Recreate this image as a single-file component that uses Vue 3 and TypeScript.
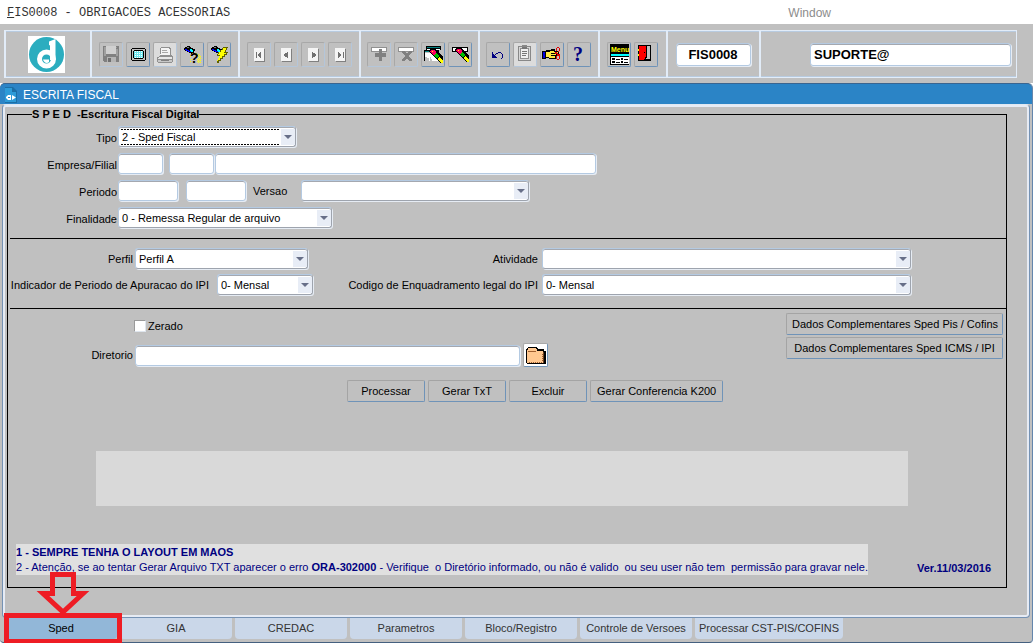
<script setup lang="ts">
import { ref } from 'vue'

interface Layer {
  d: string
  fill: string
}

interface Tool {
  label: string
  look?: 'pale' | 'dim'
  layers: Layer[]
  glyph?: 'help' | 'menu' | 'query'
}

const torch: Layer[] = [
  { fill: '#000', d: 'M7 4h3v1h1v1h2v1h2v2h-1v2h-1v1h-2v-1h-2v-1h-2v-1h-2v-1h-1v-2h1v-1h1z' },
  { fill: '#00f', d: 'M5 7h2v1h2v1h2v1h-3v-1h-2v-1h-1z' },
  { fill: '#0ff', d: 'M10 7h2v1h1v2h-2v-1h-1z' },
  { fill: '#808080', d: 'M7 5h2v1h-2z' },
]

const wand = (x: number, y: number): Layer[] => [
  { fill: '#000', d: `M${x + 2} ${y}h4l8 8v6h-3l-11 -11v-2z` },
  { fill: '#ff0060', d: `M${x + 2} ${y + 1}h3l2 2v1l-2 2h-1l-3 -3z` },
  { fill: '#ff0', d: `M${x + 3} ${y + 2}h1v1h-1zM${x + 10} ${y + 8}l4 3v3h-2l-4 -4z` },
  { fill: '#00c000', d: `M${x + 7} ${y + 4}l3 3l-2 3l-3 -3z` },
]

const page: Layer[] = [
  { fill: '#808080', d: 'M8 19h10v1H8zM17 7h1v13h-1z' },
  { fill: '#f4f4f4', d: 'M7 6h10v13H7z' },
]

const bar = (edge: string): Layer[] => [
  { fill: edge, d: 'M4 5h16v5H4z' },
  { fill: '#fff', d: 'M5 6h14v3H5z' },
]

const groups: { name: string; tools: Tool[] }[] = [
  {
    name: 'file',
    tools: [
      {
        label: 'Salvar',
        look: 'dim',
        layers: [
          { fill: '#808080', d: 'M4 4h16v16H5v-1H4z' },
          { fill: '#a0a0a0', d: 'M5 5h2v9H5zM17 7h2v7h-2zM17 5h1v1h-1z' },
          { fill: '#d0d0d0', d: 'M7 4h10v8H7z' },
          { fill: '#b4b4b4', d: 'M8 15h9v5H8z' },
          { fill: '#707070', d: 'M9 16h3v4H9z' },
        ],
      },
      {
        label: 'Tela',
        layers: [
          { fill: '#000', d: 'M6 6h13v1h1v11h-1v1H6v-1H5V7h1z' },
          { fill: '#c0c0c0', d: 'M6 7h13v11H6z' },
          { fill: '#000', d: 'M8 8h9v1h1v7h-1v1H8v-1H7V9h1z' },
          { fill: '#70e8f0', d: 'M8 9h9v7H8z' },
          {
            fill: '#fff',
            d: 'M9 9h1v1H9zM11 9h1v1h-1zM13 9h1v1h-1zM15 9h1v1h-1zM9 11h1v1H9zM11 11h1v1h-1zM13 11h1v1h-1zM15 11h1v1h-1zM9 13h1v1H9zM11 13h1v1h-1zM13 13h1v1h-1zM15 13h1v1h-1zM9 15h1v1H9zM11 15h1v1h-1zM13 15h1v1h-1zM15 15h1v1h-1z',
          },
        ],
      },
      {
        label: 'Imprimir',
        look: 'pale',
        layers: [
          { fill: '#909090', d: 'M8 5h9v1h1v7h1v1h1v6h-1v1H5v-1H4v-5h2v-1h1V6h1z' },
          { fill: '#f4f4f4', d: 'M8 6h8v1h1v6H7v-1h1z' },
          { fill: '#a8a8a8', d: 'M9 8h5v1H9zM9 10h6v1H9z' },
          { fill: '#e8e8e8', d: 'M6 15h13v2H5v-1h1z' },
          { fill: '#c8c8c8', d: 'M5 18h14v2H5z' },
          { fill: '#808080', d: 'M8 18h8v1H8z' },
        ],
      },
      {
        label: 'Entrar consulta',
        glyph: 'query',
        layers: [
          ...torch,
          {
            fill: '#ff0',
            d: 'M12 11h1v1h-1zM14 11h1v1h-1zM16 11h1v1h-1zM18 12h1v1h-1zM17 13h1v1h-1zM19 13h1v1h-1zM18 14h1v1h-1zM20 14h1v1h-1zM19 15h1v1h-1zM18 16h1v1h-1zM20 16h1v1h-1zM17 17h1v1h-1zM19 17h1v1h-1zM18 18h1v1h-1zM20 18h1v1h-1zM17 19h1v1h-1zM19 19h1v1h-1zM18 20h1v1h-1zM20 20h1v1h-1zM10 14h1v1h-1zM11 17h1v1h-1zM10 19h1v1h-1z',
          },
        ],
      },
      {
        label: 'Executar consulta',
        layers: [
          ...torch,
          { fill: '#606000', d: 'M16 5h5v1h-1v2h-1v2h2v1h-1v2h-2v2h-2v2h-2v2h-2v2h-2v-3h1v-2h1v-2h-2v-2h1v-2h2v-2h2v-2h1z' },
          { fill: '#ff0', d: 'M16 6h3v2h-1v2h-1v1h2v1h-2v2h-2v2h-2v2h-2v1h-1v-1h1v-2h1v-2h1v-1h-2v-1h1v-2h2v-2h2z' },
        ],
      },
    ],
  },
  {
    name: 'nav',
    tools: [
      { label: 'Primeiro', look: 'dim', layers: [...page, { fill: '#707070', d: 'M9 10h1v6H9zM14 10v6h-1v-1h-1v-1h-1v-2h1v-1h1v-1z' }] },
      { label: 'Anterior', look: 'dim', layers: [...page, { fill: '#707070', d: 'M14 10v6h-1v-1h-2v-1h-1v-2h1v-1h2v-1z' }] },
      { label: 'Proximo', look: 'dim', layers: [...page, { fill: '#707070', d: 'M11 10h1v1h2v1h1v2h-1v1h-2v1h-1z' }] },
      { label: 'Ultimo', look: 'dim', layers: [...page, { fill: '#707070', d: 'M15 10h1v6h-1zM10 10h1v1h1v1h1v2h-1v1h-1v1h-1z' }] },
    ],
  },
  {
    name: 'record',
    tools: [
      { label: 'Inserir', look: 'dim', layers: [...bar('#909090'), { fill: '#808080', d: 'M12 7h3v4h4v4h-4v4h-3v-4H8v-4h4z' }] },
      {
        label: 'Remover',
        look: 'dim',
        layers: [...bar('#909090'), { fill: '#808080', d: 'M8 9h3v1h1v1h2v-1h1V9h3v2h-1v1h-1v1h-1v2h1v1h1v1h1v2h-3v-1h-1v-1h-2v1h-1v1H8v-2h1v-1h1v-1h1v-2h-1v-1H9v-1H8z' }],
      },
      {
        label: 'Limpar tela',
        layers: [
          { fill: '#000', d: 'M5 4h15v4H5zM3 8h15v3h-1v-1H4v9H3z' },
          { fill: '#008080', d: 'M6 5h13v1H6zM4 9h13v1H4z' },
          { fill: '#fff', d: 'M6 7h13v1H6zM4 11h13v8H4z' },
          { fill: '#c0c0c0', d: 'M4 15h2v1h2v4H4zM9 15h1v2h1v3H9z' },
          ...wand(8, 7),
        ],
      },
      { label: 'Limpar registro', layers: [...bar('#000'), ...wand(7, 6)] },
    ],
  },
  {
    name: 'edit',
    tools: [
      { label: 'Desfazer', layers: [{ fill: '#000080', d: 'M6 10h1v2h1v1h1v-1h1v-1h2v-1h3v1h1v1h1v4h-1v1h-1v-1h1v-4h-1v-1h-3v1h-2v1h-1v1h1v1h1v1H6z' }] },
      {
        label: 'Lista',
        look: 'pale',
        layers: [
          { fill: '#888', d: 'M5 4h4V3h5v1h4v15H5z' },
          { fill: '#d8d8d8', d: 'M6 5h11v13H6z' },
          { fill: '#909090', d: 'M7 6h9v11H7z' },
          { fill: '#f0f0f0', d: 'M8 7h7v9H8z' },
          { fill: '#777', d: 'M9 5h5v2H9zM9 9h5v1H9zM9 11h5v1H9zM9 13h4v1H9z' },
        ],
      },
      {
        label: 'Recortar',
        layers: [
          { fill: '#000', d: 'M3 9h3v-1h5V7h4v2h4v3h-2v2h-1v3H9v-1H6v1H2v-8z' },
          { fill: '#0000e0', d: 'M3 10h2v6H3z' },
          { fill: '#ffe840', d: 'M6 10h4V9h4v1h4v1h-6v1h4v1h-4v1h3v2H9v-1H6z' },
          { fill: '#000', d: 'M11 11h5v1h-5zM11 13h4v1h-4z' },
          { fill: '#e00000', d: 'M17 5h2v1h1v3h-1v1h-1V9h1V6h-2v3h-1V6h1zM15 10h2v1h1v1h2v2h-1v-1h-2v-1h-2zM17 13h2v1h1v3h-1v1h-2v-1h-1v-3h1v3h2v-3h-2z' },
        ],
      },
      { label: 'Ajuda', glyph: 'help', layers: [] },
    ],
  },
  {
    name: 'app',
    tools: [
      {
        label: 'Menu',
        glyph: 'menu',
        layers: [
          { fill: '#000', d: 'M3 2h19v21H3z' },
          { fill: '#0ff', d: 'M4 12h18v2H4z' },
          { fill: '#fff', d: 'M4 15h18v7H4z' },
          { fill: '#000', d: 'M5 16h3v2H5zM9 17h4v1H9zM14 16h2v2h-2zM17 17h4v1h-4zM5 19h3v2H5zM9 20h4v1H9zM14 19h2v2h-2zM17 20h4v1h-4z' },
        ],
      },
      {
        label: 'Sair',
        layers: [
          { fill: '#000', d: 'M4 3h13v16H4z' },
          { fill: '#c0c0c0', d: 'M12 4h4v13h-4z' },
          { fill: '#f00', d: 'M5 4h7v11h-1v2h-1v1H5z' },
          { fill: '#ff0', d: 'M4 7h1v2H4zM4 12h1v2H4z' },
          { fill: '#000', d: 'M12 4h1v12h-1zM11 15h1v3h-1zM10 10h1v1h-1z' },
        ],
      },
    ],
  },
]

const tabs = ['Sped', 'GIA', 'CREDAC', 'Parametros', 'Bloco/Registro', 'Controle de Versoes', 'Processar CST-PIS/COFINS']
const activeTab = ref('Sped')
const actions = ['Processar', 'Gerar TxT', 'Excluir', 'Gerar Conferencia K200']
const extras = ['Dados Complementares Sped Pis / Cofins', 'Dados Complementares Sped ICMS / IPI']

const program = ref('FIS0008')
const user = ref('SUPORTE@')
const tipo = ref('2 - Sped Fiscal')
const finalidade = ref('0 - Remessa Regular de arquivo')
const perfil = ref('Perfil A')
const apuracao = ref('0- Mensal')
const enquadramento = ref('0- Mensal')
const versao = ref('')
const atividade = ref('')
const zerado = ref(false)
</script>

<template>
  <div class="app">
    <header class="menubar">
      <span class="program-title"><u>F</u>IS0008 - OBRIGACOES ACESSORIAS</span>
      <span class="window-menu">Window</span>
    </header>

    <div class="toolbar-area">
      <div class="toolbar">
        <div class="cell cell-logo">
          <svg class="logo" viewBox="0 0 37 37" aria-label="Logo">
            <rect width="37" height="37" fill="#fff" />
            <circle cx="18.500" cy="18.500" r="17.500" fill="#2badbf" />
            <circle cx="18.500" cy="23" r="7" fill="none" stroke="#fff" stroke-width="5" />
            <path d="M21 5.500L27.500 3V24H22V9.500L21 9Z" fill="#fff" />
            <path d="M15 23.500h6v2.500c-2 2-5 1-6-2.500Z" fill="#fff" />
          </svg>
        </div>
        <div v-for="group in groups" :key="group.name" class="cell" :class="'cell-' + group.name">
          <button
            v-for="tool in group.tools"
            :key="tool.label"
            type="button"
            class="tool"
            :class="tool.look"
            :aria-label="tool.label"
          >
            <svg class="tool-icon" viewBox="2 2 20 21" shape-rendering="crispEdges" aria-hidden="true">
              <path v-for="(layer, i) in tool.layers" :key="i" :d="layer.d" :fill="layer.fill" />
              <text v-if="tool.glyph === 'help'" class="glyph-help" x="6" y="19">?</text>
              <text v-if="tool.glyph === 'query'" class="glyph-query" x="10" y="21">?</text>
              <text v-if="tool.glyph === 'menu'" class="glyph-menu" x="4" y="10">Menu</text>
            </svg>
          </button>
        </div>
        <div class="cell cell-program">
          <input v-model="program" class="field code" aria-label="Programa" />
        </div>
        <div class="cell cell-user">
          <input v-model="user" class="field user" aria-label="Usuario" />
        </div>
      </div>
    </div>

    <div class="window">
      <div class="caption">
        <svg class="caption-icon" viewBox="0 0 12 16" aria-hidden="true">
          <path d="M0 0h8l4 4v12H0z" fill="#1c6fa6" />
          <path d="M0 1h7v4h4v10H0z" fill="#2d9bd8" />
          <path d="M1 10l2-2h3v5H3l-2-2zM7 8l4 2.500L7 13z" fill="#fff" />
          <path d="M3 10h2v1H3z" fill="#2590cf" />
        </svg>
        <h1>ESCRITA FISCAL</h1>
      </div>

      <main class="frame">
        <fieldset class="form">
          <legend>S P E D&nbsp; -Escritura Fiscal Digital</legend>

          <div class="section rows">
            <div class="row">
              <label class="lead" for="tipo">Tipo</label>
              <span class="select w-tipo focus">
                <select id="tipo" v-model="tipo"><option>2 - Sped Fiscal</option></select>
                <i class="arrow"></i>
              </span>
            </div>
            <div class="row">
              <label class="lead" for="empresa">Empresa/Filial</label>
              <input id="empresa" class="field w-code" />
              <input class="field w-code filial" aria-label="Filial" />
              <input class="field w-name" aria-label="Nome da empresa" />
            </div>
            <div class="row">
              <label class="lead" for="periodo">Periodo</label>
              <input id="periodo" class="field w-date" />
              <input class="field w-date until" aria-label="Periodo final" />
              <label class="versao" for="versao">Versao</label>
              <span class="select w-versao">
                <select id="versao" v-model="versao"><option></option></select>
                <i class="arrow"></i>
              </span>
            </div>
            <div class="row">
              <label class="lead" for="finalidade">Finalidade</label>
              <span class="select w-finalidade">
                <select id="finalidade" v-model="finalidade"><option>0 - Remessa Regular de arquivo</option></select>
                <i class="arrow"></i>
              </span>
            </div>
          </div>

          <hr />

          <div class="section profile">
            <div class="row">
              <label class="lead-mid" for="perfil">Perfil</label>
              <span class="select w-perfil">
                <select id="perfil" v-model="perfil"><option>Perfil A</option></select>
                <i class="arrow"></i>
              </span>
            </div>
            <label class="right" for="atividade">Atividade</label>
            <span class="select">
              <select id="atividade" v-model="atividade"><option></option></select>
              <i class="arrow"></i>
            </span>
            <div class="row">
              <label class="lead-wide" for="apuracao">Indicador de Periodo de Apuracao do IPI</label>
              <span class="select w-mensal">
                <select id="apuracao" v-model="apuracao"><option>0- Mensal</option></select>
                <i class="arrow"></i>
              </span>
            </div>
            <label class="right" for="enquadramento">Codigo de Enquadramento legal do IPI</label>
            <span class="select">
              <select id="enquadramento" v-model="enquadramento"><option>0- Mensal</option></select>
              <i class="arrow"></i>
            </span>
          </div>

          <hr />

          <div class="output">
            <div class="target">
              <label class="check"><input v-model="zerado" type="checkbox" />Zerado</label>
              <div class="row">
                <label class="lead-mid" for="diretorio">Diretorio</label>
                <input id="diretorio" class="field w-dir" />
                <button type="button" class="folder" aria-label="Abrir pasta">
                  <svg viewBox="0 0 20 17" aria-hidden="true" shape-rendering="crispEdges">
                    <path d="M1 1h1V0h9v1h1v1h6v2h2v13H1v-1H0V2h1z" fill="#000" />
                    <path d="M2 1h8v1h1v2h6v12H1V3h1z" fill="#ffc890" />
                    <path d="M17 5h1v11h-1z" fill="#6e4020" />
                    <path d="M2 4h8v1H2zM3 15h1v1H3zM5 15h1v1H5zM7 15h1v1H7zM9 15h1v1H9zM11 15h1v1h-1zM13 15h1v1h-1zM15 15h1v1h-1zM16 13h1v1h-1zM16 11h1v1h-1zM16 9h1v1h-1zM16 7h1v1h-1z" fill="#a06030" />
                  </svg>
                </button>
              </div>
            </div>
            <div class="extras">
              <button v-for="item in extras" :key="item" type="button" class="button">{{ item }}</button>
            </div>
          </div>

          <div class="actions">
            <button v-for="item in actions" :key="item" type="button" class="button action">{{ item }}</button>
          </div>

          <div class="log"></div>

          <div class="notes">
            <div class="note-text">
              <p><b>1 - SEMPRE TENHA O LAYOUT EM MAOS</b></p>
              <p>2 - Atenção, se ao tentar Gerar Arquivo TXT aparecer o erro <b>ORA-302000</b> - Verifique&nbsp; o Diretório informado, ou não é valido&nbsp; ou seu user não tem&nbsp; permissão para gravar nele.</p>
            </div>
            <b class="version">Ver.11/03/2016</b>
          </div>
        </fieldset>
      </main>

      <nav class="tabs" aria-label="Paginas">
        <div v-for="tab in tabs" :key="tab" class="tab-slot">
          <button type="button" class="tab" :class="{ active: tab === activeTab }" @click="activeTab = tab">{{ tab }}</button>
          <template v-if="tab === 'Sped'">
            <span class="marker"></span>
            <svg class="pointer" viewBox="0 0 50 44" aria-hidden="true">
              <path d="M14.500 2.500H35.500V21.500H45L25 40L5 21.500H14.500Z" fill="none" stroke="#ee1c24" stroke-width="5" />
            </svg>
          </template>
        </div>
      </nav>
    </div>
  </div>
</template>

<style>
body {
  background: #fff;
}
</style>

<style scoped>
.app {
  font: 11px/14px "Liberation Sans", Arial, sans-serif;
  color: #000;
}

.app * {
  box-sizing: border-box;
}

button,
input,
select {
  font: inherit;
  color: inherit;
  margin: 0;
}

.menubar {
  display: flex;
  height: 24px;
  align-items: center;
  justify-content: space-between;
  padding: 2px 202px 0 7px;
}

.program-title {
  font: 12px/14px "Liberation Mono", "Courier New", monospace;
  color: #333;
}

.window-menu {
  font-size: 12px;
  color: #8c8c8c;
}

.toolbar-area {
  background: #c0c0c0;
  padding: 6px 16px 5px 4px;
}

.toolbar {
  display: flex;
  height: 48px;
  border: 1px solid #e2ecf8;
  border-left-width: 0;
  box-shadow: inset 0 1px #b8cbe0, inset 0 -1px #b8cbe0;
}

.cell {
  display: flex;
  flex: none;
  align-items: center;
  justify-content: center;
  gap: 3px;
  padding-right: 1px;
  border-left: 2px solid #e2ecf8;
}

.cell-logo {
  width: 86px;
  padding-right: 3px;
}

.cell-file {
  width: 148px;
}

.cell-nav {
  width: 121px;
}

.cell-record {
  width: 119px;
}

.cell-edit {
  width: 120px;
}

.cell-app {
  width: 68px;
}

.cell-program {
  width: 93px;
}

.cell-user {
  flex: 1;
  justify-content: flex-end;
  padding-right: 5px;
}

.logo {
  width: 37px;
  height: 37px;
}

.tool {
  display: flex;
  width: 24px;
  height: 25px;
  padding: 0;
  align-items: center;
  justify-content: center;
  background: #c0c0c0;
  border: 1px solid #a8a8a8;
  border-right-color: #6f93b8;
  border-bottom-color: #6f93b8;
  border-radius: 2px;
}

.tool.dim,
.tool.pale {
  border-right-color: #b4c6da;
  border-bottom-color: #b4c6da;
}

.tool.pale {
  background: #dcdcdc;
}

.tool-icon {
  width: 20px;
  height: 21px;
  flex: none;
  overflow: visible;
}

.glyph-help {
  font: bold 20px "Liberation Serif", serif;
  fill: #000080;
}

.glyph-query {
  font: bold 14px "Liberation Sans", sans-serif;
  fill: #000;
}

.glyph-menu {
  font: bold 7px "Liberation Sans", sans-serif;
  fill: #ff0;
}

.field {
  height: 21px;
  min-width: 0;
  padding: 0 3px;
  background: #fff;
  border: 1px solid #b4cae2;
  border-radius: 3px;
  box-shadow: inset 0 1px #a4a8b0, 1px 1px #e6ecf4;
  outline: none;
}

.code,
.user {
  height: 23px;
  font-size: 13px;
  font-weight: bold;
}

.code {
  width: 75px;
  text-align: center;
}

.user {
  width: 201px;
}

.window {
  background: #c0c0c0;
  border-right: 1px solid #6486ac;
  border-bottom: 1px solid #44607f;
  border-radius: 5px 5px 4px 4px;
}

.caption {
  display: flex;
  height: 21px;
  align-items: center;
  gap: 6px;
  padding: 1px 0 0 5px;
  background: #2b84c6;
  border-top: 1px solid #3a6590;
  border-radius: 5px 5px 0 0;
}

.caption-icon {
  width: 12px;
  height: 16px;
}

h1 {
  margin: 0;
  font-size: 12px;
  font-weight: normal;
  color: #fff;
}

.frame {
  margin: 0 2px;
  padding: 3px 22px 29px 4px;
  border: 1px solid #7592b4;
  border-top-color: #dfe8f2;
  border-radius: 4px;
  box-shadow: inset 0 0 0 2px #e6ebf4;
}

.form {
  min-width: 0;
  margin: 0;
  padding: 0;
  border: 1px solid #000;
}

legend {
  margin-left: 24px;
  padding: 0;
  font-weight: bold;
  line-height: 13px;
}

.rows {
  display: flex;
  flex-direction: column;
  gap: 6px;
  padding: 5px 0 10px;
}

.row {
  display: flex;
  align-items: center;
  min-width: 0;
}

.lead,
.lead-mid,
.lead-wide,
.right {
  flex: none;
  text-align: right;
  white-space: nowrap;
}

.lead {
  width: 109px;
  margin-right: 1px;
  padding-top: 2px;
}

.lead-mid {
  width: 125px;
  margin-right: 2px;
}

.lead-wide {
  width: 201px;
  margin-right: 8px;
}

.right {
  padding-right: 4px;
}

.w-code {
  width: 45px;
}

.filial {
  margin: 0 1px 0 6px;
}

.w-name {
  flex: 0 1 381px;
}

.w-date {
  width: 60px;
}

.until {
  margin-left: 8px;
}

.versao {
  width: 55px;
  padding-left: 7px;
}

.w-versao {
  flex: 0 1 228px;
}

.w-tipo {
  width: 178px;
}

.w-finalidade {
  width: 214px;
}

.w-perfil {
  width: 173px;
}

.w-mensal {
  width: 96px;
}

.w-dir {
  flex: 0 1 385px;
}

.select {
  display: grid;
  grid-template-columns: minmax(0, 1fr) 14px;
  height: 21px;
  padding: 2px 0 1px 1px;
  background: #fff;
  border: 1px solid #b4cae2;
  border-right-color: #9ea4ae;
  border-bottom-color: #9ea4ae;
  border-radius: 3px;
  box-shadow: inset 0 1px #a4a8b0, 1px 1px #e6ecf4;
}

select {
  grid-area: 1 / 1 / 2 / 3;
  padding: 0 16px 0 2px;
  appearance: none;
  background: none;
  border: 0;
  outline: none;
}

.focus select {
  background:
    repeating-linear-gradient(90deg, #000 0 2px, #fff 2px 3px) 1px 0 / calc(100% - 16px) 1px no-repeat,
    repeating-linear-gradient(90deg, #000 0 2px, #fff 2px 3px) 1px 100% / calc(100% - 16px) 1px no-repeat;
}

.arrow {
  grid-area: 1 / 2;
  display: grid;
  place-items: center;
  background: #e8edf6;
  pointer-events: none;
}

.arrow::before {
  content: "";
  border: 4px solid transparent;
  border-top-color: #676f88;
  border-bottom-width: 0;
}

hr {
  height: 1px;
  margin: 0 0 0 2px;
  border: 0;
  background: #000;
}

.profile {
  display: grid;
  grid-template-columns: 306px 228px minmax(0, 1fr);
  gap: 5px 0;
  align-items: center;
  padding: 9px 95px 13px 0;
}

.output {
  display: flex;
  justify-content: space-between;
  padding: 4px 3px 0 0;
}

.target {
  flex: 1;
  min-width: 0;
  padding-top: 6px;
}

.check {
  display: flex;
  width: max-content;
  align-items: center;
  gap: 2px;
  margin: 0 0 10px 126px;
}

.check input {
  width: 12px;
  height: 12px;
  appearance: none;
  background: #fff;
  border: 1px solid #9a9a9a;
  border-right-color: #dfe6ee;
  border-bottom-color: #dfe6ee;
}

.folder {
  display: flex;
  width: 25px;
  height: 24px;
  margin-left: 3px;
  padding: 0;
  align-items: center;
  justify-content: center;
  background: #fff;
  border: 1px solid #a8a8a8;
  border-right-color: #6f93b8;
  border-bottom-color: #6f93b8;
  border-radius: 2px;
}

.folder svg {
  width: 20px;
  height: 17px;
}

.extras {
  display: flex;
  flex-direction: column;
  gap: 2px;
  width: 217px;
}

.button {
  height: 22px;
  padding: 0 5px;
  background: #c0c0c0;
  border: 1px solid #a4a4a4;
  border-right-color: #6f93b8;
  border-bottom-color: #6f93b8;
  border-radius: 2px;
  white-space: nowrap;
}

.actions {
  display: flex;
  gap: 3px;
  padding: 13px 0 0 339px;
}

.action {
  min-width: 78px;
  padding: 0 6px;
}

.log {
  height: 55px;
  margin: 49px 98px 38px 88px;
  background: #d9d9d9;
}

.notes {
  display: flex;
  align-items: flex-end;
  justify-content: space-between;
  padding: 0 15px 12px 8px;
  color: #000080;
}

.note-text {
  padding: 1px 0 0;
  background: #e0e0e0;
}

.note-text p {
  margin: 0;
  line-height: 15px;
}

.version {
  white-space: nowrap;
}

.tabs {
  display: flex;
  gap: 3px;
  padding: 0 5px 3px;
}

.tab-slot {
  position: relative;
}

.tab {
  min-width: 112px;
  height: 21px;
  padding: 0 4px 1px;
  background: #cad7e9;
  border: 0;
  border-radius: 0 0 4px 4px;
  color: #333;
}

.tab.active {
  background: #92b7d8;
  color: #000;
}

.marker {
  position: absolute;
  z-index: 1;
  inset: -5px -5px -5px -1px;
  border: 5px solid #ee1c24;
  pointer-events: none;
}

.pointer {
  position: absolute;
  left: 33px;
  bottom: 23px;
  z-index: 1;
  width: 50px;
  height: 44px;
  overflow: visible;
  pointer-events: none;
}
</style>
